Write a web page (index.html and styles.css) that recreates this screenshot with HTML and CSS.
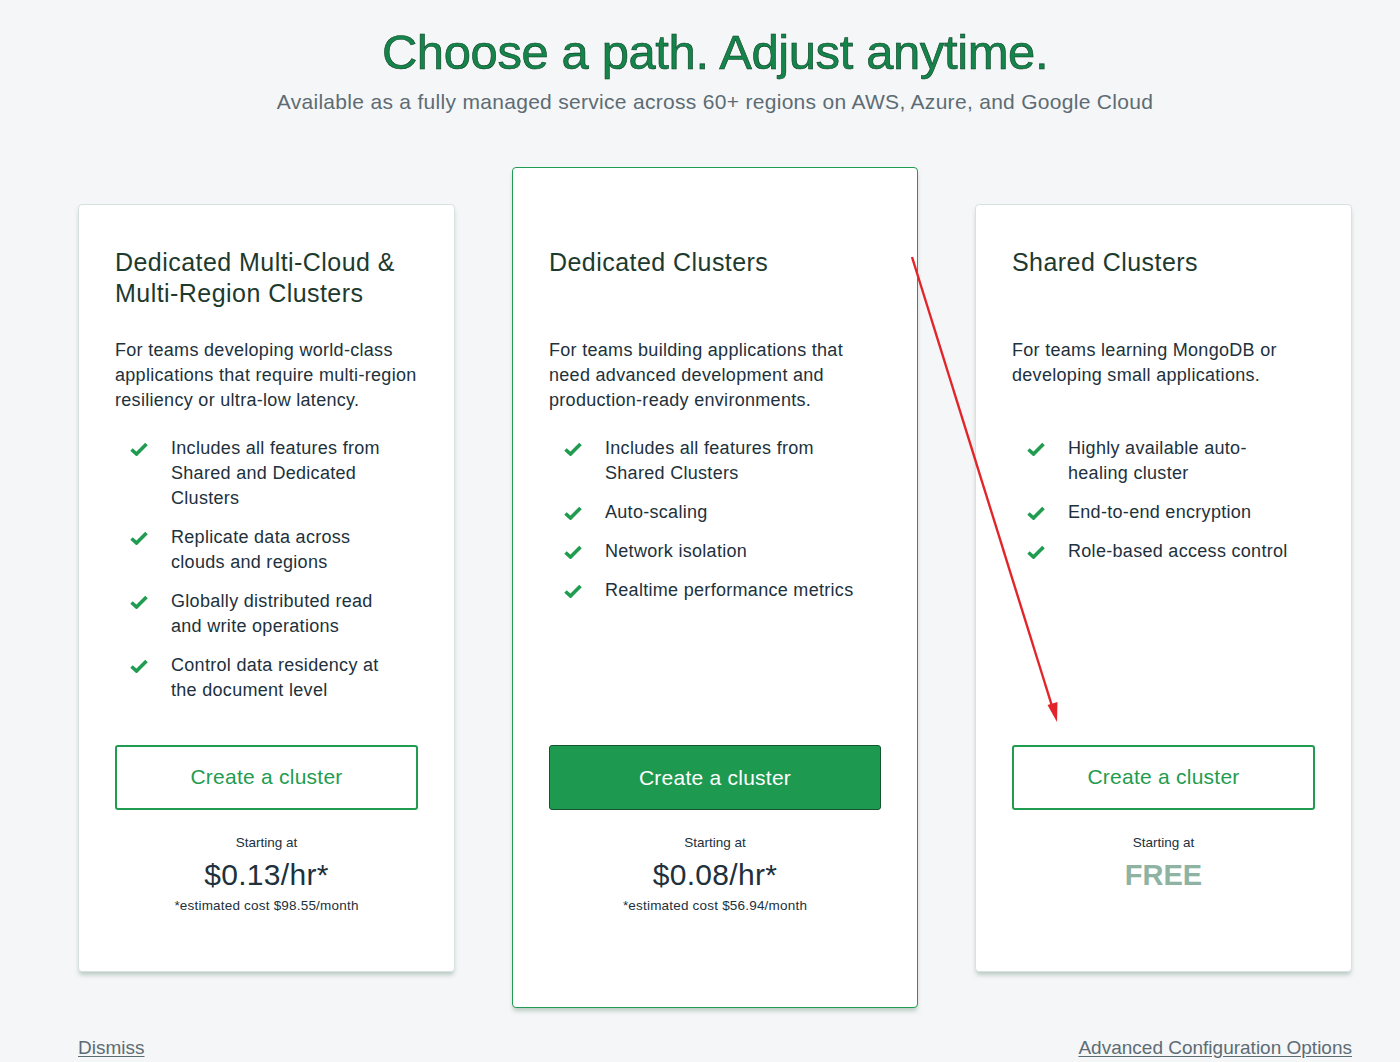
FILE: index.html
```html
<!DOCTYPE html>
<html lang="en">
<head>
<meta charset="utf-8">
<title>Choose a path</title>
<link rel="stylesheet" href="styles.css">
</head>
<body>
<div class="page">
  <header class="hero">
    <h1 class="hero-title">Choose a path. Adjust anytime.</h1>
    <p class="hero-sub">Available as a fully managed service across 60+ regions on AWS, Azure, and Google Cloud</p>
  </header>

  <section class="cards">
    <article class="card">
      <h2 class="card-title">Dedicated Multi-Cloud &amp; Multi-Region Clusters</h2>
      <p class="card-desc">For teams developing world-class applications that require multi-region resiliency or ultra-low latency.</p>
      <ul class="features">
        <li class="feature"><svg class="check" viewBox="0 0 18 14"><path d="M1.5 7.5 L6.5 12 L16.5 2"/></svg><span>Includes all features from Shared and Dedicated Clusters</span></li>
        <li class="feature"><svg class="check" viewBox="0 0 18 14"><path d="M1.5 7.5 L6.5 12 L16.5 2"/></svg><span>Replicate data across clouds and regions</span></li>
        <li class="feature"><svg class="check" viewBox="0 0 18 14"><path d="M1.5 7.5 L6.5 12 L16.5 2"/></svg><span>Globally distributed read and write operations</span></li>
        <li class="feature"><svg class="check" viewBox="0 0 18 14"><path d="M1.5 7.5 L6.5 12 L16.5 2"/></svg><span>Control data residency at the document level</span></li>
      </ul>
      <a class="btn btn-outline" href="#">Create a cluster</a>
      <div class="pricing">
        <div class="starting">Starting at</div>
        <div class="price">$0.13/hr*</div>
        <div class="estimate">*estimated cost $98.55/month</div>
      </div>
    </article>

    <article class="card card-featured">
      <h2 class="card-title">Dedicated Clusters</h2>
      <p class="card-desc">For teams building applications that need advanced development and production-ready environments.</p>
      <ul class="features">
        <li class="feature"><svg class="check" viewBox="0 0 18 14"><path d="M1.5 7.5 L6.5 12 L16.5 2"/></svg><span>Includes all features from Shared Clusters</span></li>
        <li class="feature"><svg class="check" viewBox="0 0 18 14"><path d="M1.5 7.5 L6.5 12 L16.5 2"/></svg><span>Auto-scaling</span></li>
        <li class="feature"><svg class="check" viewBox="0 0 18 14"><path d="M1.5 7.5 L6.5 12 L16.5 2"/></svg><span>Network isolation</span></li>
        <li class="feature"><svg class="check" viewBox="0 0 18 14"><path d="M1.5 7.5 L6.5 12 L16.5 2"/></svg><span>Realtime performance metrics</span></li>
      </ul>
      <a class="btn btn-filled" href="#">Create a cluster</a>
      <div class="pricing">
        <div class="starting">Starting at</div>
        <div class="price">$0.08/hr*</div>
        <div class="estimate">*estimated cost $56.94/month</div>
      </div>
    </article>

    <article class="card">
      <h2 class="card-title">Shared Clusters</h2>
      <p class="card-desc">For teams learning MongoDB or developing small applications.</p>
      <ul class="features">
        <li class="feature"><svg class="check" viewBox="0 0 18 14"><path d="M1.5 7.5 L6.5 12 L16.5 2"/></svg><span>Highly available auto-healing cluster</span></li>
        <li class="feature"><svg class="check" viewBox="0 0 18 14"><path d="M1.5 7.5 L6.5 12 L16.5 2"/></svg><span>End-to-end encryption</span></li>
        <li class="feature"><svg class="check" viewBox="0 0 18 14"><path d="M1.5 7.5 L6.5 12 L16.5 2"/></svg><span>Role-based access control</span></li>
      </ul>
      <a class="btn btn-outline" href="#">Create a cluster</a>
      <div class="pricing">
        <div class="starting">Starting at</div>
        <div class="price price-free">FREE</div>
      </div>
    </article>
  </section>

  <footer class="footer-links">
    <a class="link" href="#">Dismiss</a>
    <a class="link" href="#">Advanced Configuration Options</a>
  </footer>

  <svg class="annotation" width="1400" height="1062" viewBox="0 0 1400 1062">
    <line x1="912" y1="257" x2="1052" y2="706" stroke="#e2252b" stroke-width="2.4"/>
    <polygon points="1057,722 1047.5,705 1057.5,702" fill="#e2252b"/>
  </svg>
</div>
</body>
</html>
```

FILE: styles.css
```css
* { box-sizing: border-box; }

html, body {
  margin: 0;
  padding: 0;
  background: #f5f6f7;
}

body {
  font-family: "Liberation Sans", Arial, sans-serif;
  color: #21313c;
  width: 1400px;
  height: 1062px;
  overflow: hidden;
}

.page {
  position: relative;
  width: 1400px;
  height: 1062px;
  padding: 0 48px 0 78px;
}

.hero {
  text-align: center;
  padding-top: 22px;
}

.hero-title {
  margin: 0;
  font-size: 49px;
  line-height: 60px;
  font-weight: 400;
  color: #15844a;
  -webkit-text-stroke: 0.6px #0b4126;
  letter-spacing: -0.4px;
}

.hero-sub {
  margin: 7px 0 0;
  font-size: 21px;
  line-height: 26px;
  letter-spacing: 0.3px;
  color: #5d6c74;
}

.cards {
  display: flex;
  align-items: center;
  gap: 57px;
  margin-top: 52px;
}

.card {
  width: 377px;
  height: 768px;
  background: #ffffff;
  border: 1px solid #d8e0e1;
  border-radius: 4px;
  box-shadow: 0 4px 4px -1px rgba(140, 170, 155, 0.55);
  padding: 42px 36px 0;
  display: flex;
  flex-direction: column;
}

.card-featured {
  width: 406px;
  height: 841px;
  border: 1px solid #1f9c4f;
  padding-top: 79px;
}

.card-title {
  margin: 0;
  font-size: 25px;
  line-height: 31px;
  font-weight: 400;
  letter-spacing: 0.45px;
  min-height: 62px;
  color: #1e3a2e;
}

.card-desc {
  margin: 29px 0 0;
  font-size: 18px;
  line-height: 25px;
  letter-spacing: 0.3px;
  min-height: 75px;
  color: #21313c;
}

.features {
  list-style: none;
  margin: 23px 0 0;
  padding: 0 16px 0 0;
  height: 309px;
  display: flex;
  flex-direction: column;
  gap: 14px;
}

.feature {
  display: flex;
  align-items: flex-start;
  font-size: 18px;
  line-height: 25px;
  letter-spacing: 0.3px;
  padding-left: 15px;
}

.check {
  width: 18px;
  height: 14px;
  flex: none;
  margin-top: 6px;
  margin-right: 23px;
  fill: none;
  stroke: #1f9c4f;
  stroke-width: 3.6;
  stroke-linecap: butt;
  stroke-linejoin: miter;
}

.btn {
  display: flex;
  align-items: center;
  justify-content: center;
  height: 65px;
  border-radius: 3px;
  font-size: 21px;
  letter-spacing: 0.25px;
  text-decoration: none;
}

.btn-outline {
  border: 2px solid #1f9c4f;
  color: #1f9c4f;
  background: #ffffff;
}

.btn-filled {
  border: 1px solid #14542f;
  background: #1d9a4f;
  color: #ffffff;
}

.pricing {
  text-align: center;
  margin-top: 25px;
}

.starting {
  font-size: 13.5px;
  line-height: 16px;
  color: #21313c;
}

.price {
  font-size: 30px;
  line-height: 36px;
  margin-top: 6px;
  letter-spacing: 0.3px;
  color: #21313c;
}

.price-free {
  font-weight: 700;
  font-size: 29px;
  color: #8eb3a2;
  letter-spacing: 0;
}

.estimate {
  margin-top: 5px;
  font-size: 13.5px;
  line-height: 16px;
  letter-spacing: 0.2px;
  color: #21313c;
}

.footer-links {
  display: flex;
  justify-content: space-between;
  width: 1274px;
  margin-top: 28px;
}

.link {
  font-size: 19px;
  line-height: 24px;
  color: #5d6c74;
  text-decoration: underline;
  text-underline-offset: 2px;
}

.annotation {
  position: absolute;
  left: 0;
  top: 0;
  pointer-events: none;
}
```
